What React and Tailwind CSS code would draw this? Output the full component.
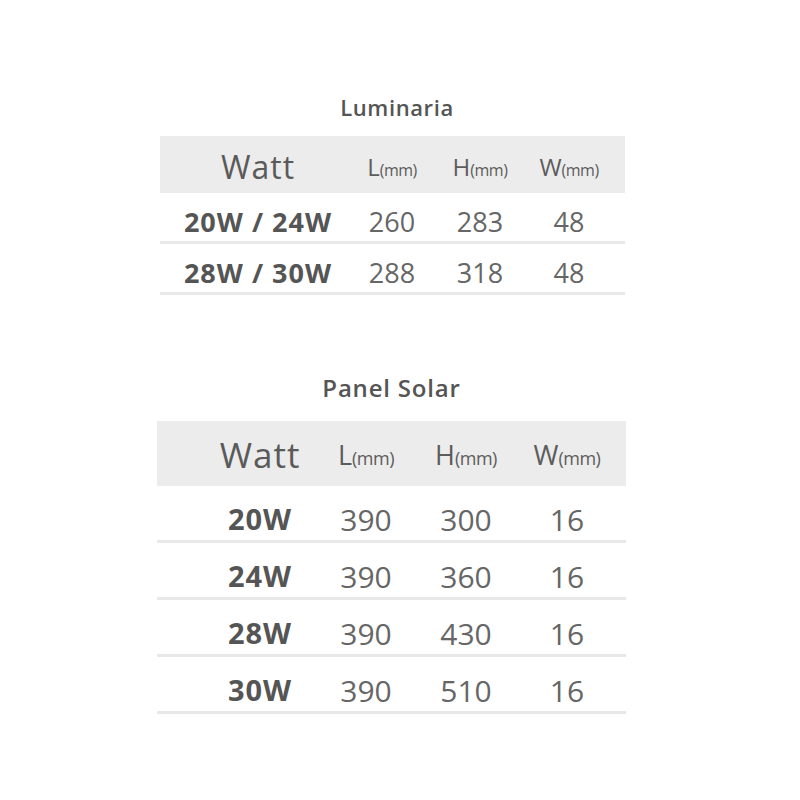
import React from "react";

const font = { fontFamily: '"Open Sans", "Noto Sans", sans-serif' };

function Unit({ letter, big }) {
  return (
    <span className="whitespace-nowrap">
      <span className={big ? "text-[27px]" : "text-[24px]"}>{letter}</span>
      <span className={big ? "text-[18px] tracking-[-0.5px]" : "text-[16px] tracking-[-0.5px]"}>(mm)</span>
    </span>
  );
}

export default function App() {
  const t1 = [
    ["20W / 24W", "260", "283", "48"],
    ["28W / 30W", "288", "318", "48"],
  ];
  const t2 = [
    ["20W", "390", "300", "16"],
    ["24W", "390", "360", "16"],
    ["28W", "390", "430", "16"],
    ["30W", "390", "510", "16"],
  ];
  return (
    <div className="w-[800px] h-[800px] bg-white text-[#5c5c5c] pt-[92px]" style={font}>
      {/* Luminaria */}
      <div className="ml-[160px] w-[465px]">
        <div className="h-[30px] flex items-center justify-center text-[22px] tracking-[0.6px] font-semibold text-[#555] pl-[9px]">
          Luminaria
        </div>
        <div className="mt-[14px] h-[57px] bg-[#ececec] flex items-center">
          <div className="w-[196px] flex justify-center text-[32px] tracking-[1px] text-[#5a5a5a] pt-[4px]">Watt</div>
          <div className="w-[72px] flex justify-center pt-[4px]"><Unit letter="L" /></div>
          <div className="w-[104px] flex justify-center pt-[4px]"><Unit letter="H" /></div>
          <div className="w-[74px] flex justify-center pt-[4px]"><Unit letter="W" /></div>
        </div>
        {t1.map((r, i) => (
          <div key={i} className="h-[51px] border-b-[3px] border-[#e8e8e8] flex items-center pt-[10px] box-border">
            <div className="w-[196px] flex justify-center text-[27px] tracking-[1px] font-bold text-[#555] whitespace-nowrap">{r[0]}</div>
            <div className="w-[72px] flex justify-center text-[27px] text-[#666]">{r[1]}</div>
            <div className="w-[104px] flex justify-center text-[27px] text-[#666]">{r[2]}</div>
            <div className="w-[74px] flex justify-center text-[27px] text-[#666]">{r[3]}</div>
          </div>
        ))}
      </div>

      {/* Panel Solar */}
      <div className="ml-[157px] w-[469px] mt-[78px]">
        <div className="h-[30px] flex items-center justify-center text-[24px] tracking-[0.8px] font-semibold text-[#555]">
          Panel Solar
        </div>
        <div className="mt-[18px] h-[65px] bg-[#ececec] flex items-center">
          <div className="w-[156px] pl-[50px] flex justify-center text-[35px] tracking-[1px] text-[#5a5a5a] pt-[4px]">Watt</div>
          <div className="w-[106px] flex justify-center pt-[4px]"><Unit letter="L" big /></div>
          <div className="w-[94px] flex justify-center pt-[4px]"><Unit letter="H" big /></div>
          <div className="w-[108px] flex justify-center pt-[4px]"><Unit letter="W" big /></div>
        </div>
        {t2.map((r, i) => (
          <div key={i} className="h-[57px] border-b-[3px] border-[#e8e8e8] flex items-center pt-[12px] box-border">
            <div className="w-[156px] pl-[50px] flex justify-center text-[29px] tracking-[1px] font-bold text-[#555]">{r[0]}</div>
            <div className="w-[106px] flex justify-center text-[30px] text-[#666]">{r[1]}</div>
            <div className="w-[94px] flex justify-center text-[30px] text-[#666]">{r[2]}</div>
            <div className="w-[108px] flex justify-center text-[30px] text-[#666]">{r[3]}</div>
          </div>
        ))}
      </div>
    </div>
  );
}
